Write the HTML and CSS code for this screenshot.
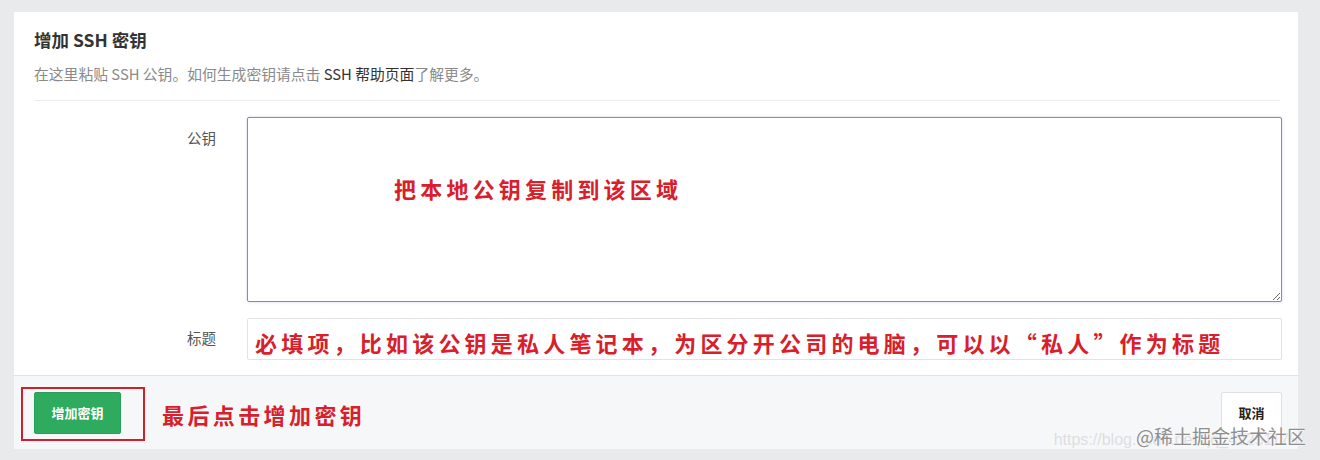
FILE: index.html
```html
<!DOCTYPE html>
<html lang="zh-CN">
<head>
<meta charset="utf-8">
<title>增加 SSH 密钥</title>
<link rel="stylesheet" href="styles.css">
</head>
<body>
<div class="card">
  <div class="head">
    <h2 class="title">增加 SSH 密钥</h2>
    <p class="sub">在这里粘贴 SSH 公钥。如何生成密钥请点击 <a class="link">SSH 帮助页面</a>了解更多。</p>
  </div>
  <div class="form">
    <div class="row">
      <label class="label label-key">公钥</label>
      <div class="control">
        <textarea class="textarea"></textarea>
        <span class="note note-key">把本地公钥复制到该区域</span>
      </div>
    </div>
    <div class="row">
      <label class="label label-title">标题</label>
      <div class="control">
        <div class="input"><span class="note">必填项，比如该公钥是私人笔记本，为区分开公司的电脑，可以以“私人”作为标题</span></div>
      </div>
    </div>
  </div>
  <div class="footer">
    <div class="left">
      <div class="btn-wrap">
        <button class="btn btn-primary">增加密钥</button>
        <span class="redbox"></span>
      </div>
      <span class="note note-foot">最后点击增加密钥</span>
    </div>
    <button class="btn btn-default">取消</button>
    <div class="wm">
      <span class="wm-url">https://blog.csdn.net/qq_42251175</span>
      <span class="wm-main">@稀土掘金技术社区</span>
    </div>
  </div>
</div>
</body>
</html>
```
FILE: styles.css
```css
* { box-sizing: border-box; }
html, body { margin: 0; padding: 0; }
body {
  background: #e9eaec;
  font-family: "Noto Sans CJK SC", "Noto Sans", sans-serif;
  width: 1320px;
  height: 460px;
  overflow: hidden;
  padding-top: 12px;
}
.card {
  margin-left: 14px;
  width: 1284px;
  background: #fff;
  position: relative;
}
.head {
  padding: 16px 18px 0 20px;
}
.title {
  margin: 0;
  font-size: 17.5px;
  line-height: 24px;
  font-weight: 700;
  color: #333;
}
.sub {
  margin: 11px 0 0;
  padding-bottom: 15px;
  font-size: 14.8px;
  line-height: 22px;
  color: #8a8a8a;
  border-bottom: 1px solid #ececec;
}
.link { color: #333; }
.form {
  padding: 16px 16px 15px 20px;
  display: flex;
  flex-direction: column;
  gap: 16px;
}
.row {
  display: flex;
  gap: 31px;
}
.label {
  width: 182px;
  flex: none;
  text-align: right;
  font-size: 14.5px;
  color: #555;
  line-height: 20px;
}
.label-key { padding-top: 11px; }
.label-title { padding-top: 10px; }
.control {
  flex: 1;
  position: relative;
}
.textarea {
  display: block;
  width: 100%;
  height: 185px;
  border: 1px solid #868caa;
  border-radius: 2px;
  box-shadow: 0 0 3px rgba(120, 130, 180, 0.35);
  resize: vertical;
  outline: none;
  background: #fff;
}
.note {
  font-family: "Noto Sans CJK SC", sans-serif;
  color: #d8202c;
  font-size: 22px;
  font-weight: 700;
  letter-spacing: 4.2px;
  line-height: 28px;
}
.note-key {
  position: absolute;
  left: 147px;
  top: 57px;
}
.input {
  height: 42px;
  border: 1px solid #e3e3e3;
  border-radius: 2px;
  padding: 9px 0 0 7px;
  white-space: nowrap;
  overflow: hidden;
}
.input .note { letter-spacing: 4.2px; line-height: 28px; display: block; }
.footer {
  border-top: 1px solid #e2e3e5;
  background: #f6f7f9;
  height: 74px;
  padding: 0 16px 0 20px;
  display: flex;
  align-items: center;
  justify-content: space-between;
  position: relative;
}
.left {
  display: flex;
  align-items: center;
  gap: 41px;
}
.btn-wrap { position: relative; }
.btn {
  font-family: "Noto Sans CJK SC", sans-serif;
  font-size: 13px;
  font-weight: 700;
  height: 42px;
  border-radius: 2px;
  cursor: pointer;
  display: block;
}
.btn-primary {
  width: 87px;
  background: #2eab5e;
  border: 1px solid #29a057;
  color: #fff;
}
.btn-default {
  width: 61px;
  background: #fff;
  border: 1px solid #e0e0e0;
  color: #222;
}
.redbox {
  position: absolute;
  left: -13px;
  top: -5px;
  right: -24px;
  bottom: -7px;
  border: 2px solid #cf1f2b;
}
.note-foot { letter-spacing: 3.4px; padding-top: 2px; }
.wm {
  position: absolute;
  right: -8px;
  bottom: 0;
  height: 30px;
  width: 240px;
}
.wm-url {
  position: absolute;
  right: 8px;
  bottom: 0;
  font-family: "Liberation Sans", sans-serif;
  font-size: 16px;
  line-height: 18px;
  color: rgba(200, 200, 205, 0.55);
  white-space: nowrap;
}
.wm-main {
  position: absolute;
  right: 0;
  bottom: 1px;
  font-size: 19px;
  line-height: 24px;
  color: #8e8e8e;
  white-space: nowrap;
  text-shadow: 0 0 2px #fff, 0 0 2px #fff;
}
```
